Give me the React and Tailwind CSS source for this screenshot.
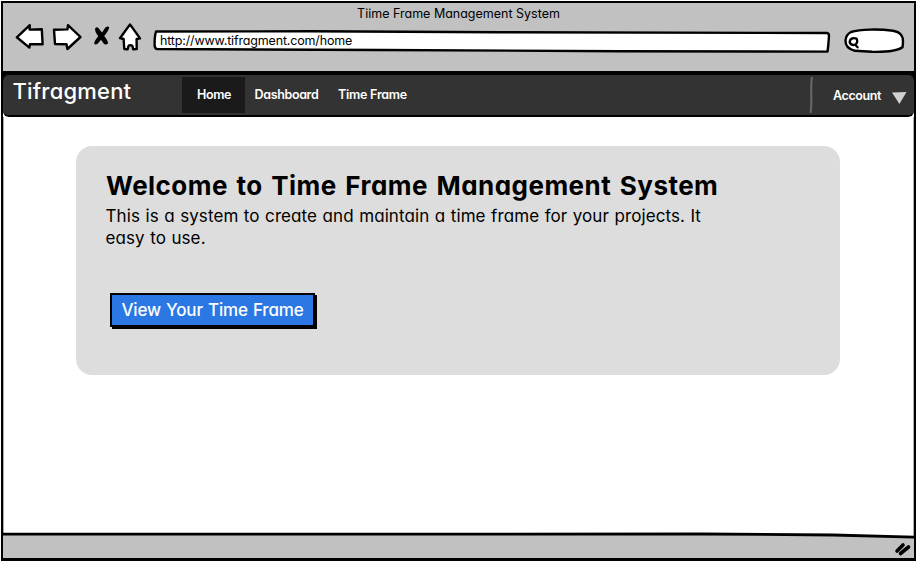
const ink = {
  fill: "white",
  stroke: "black",
  strokeWidth: 2.4,
  strokeLinejoin: "round",
  strokeLinecap: "round",
};

function NavigationIcons() {
  return (
    <div className="flex h-[30px] w-[128px] shrink-0">
      <svg width="128" height="30" viewBox="15 22 128 30" {...ink}>
        <path d="M16.8 37.3 29.8 25.2 29.6 29.6 41.8 29.2 42.6 44.3 30 44.1 29.4 47.6 Z" />
        <path d="M54 29.8 67.5 29.4 68 25.2 80.5 37 67.4 49 66.5 44.2 55 44 Z" />
        <path d="M95.2 28.2Q97.2 26 98.8 28.6L102 32.6 105.4 27.4Q108.6 25.6 109.2 27.6 108.6 31 104.2 36 108.4 41 108 43.6 105.4 45.6 103.6 43.6L101 39.8 97.6 43.8Q95 45.4 94.2 43.6 94 41.4 98.2 36.2 94.4 31 95.2 28.2Z" fill="black" stroke="none" />
        <path d="M130 24.4 140 38.4 136.6 39 136.7 49 133.2 49.2 132.6 46.4C132 44.7 128.8 44.7 128.3 46.4L127.7 49.2 124.3 49 123.6 39 120 38.2 Z" />
      </svg>
    </div>
  );
}

function AddressBar() {
  return (
    <div className="relative ml-[10px] mt-[7px] h-[24px] w-[678px] shrink-0">
      <svg className="absolute inset-0" width="678" height="24" viewBox="153 29 678 24" {...ink}>
        <path d="M156 31.5 310 31.3 500 32.2 827 33Q829 33.2 829 36L828.2 46 827.5 51.6 620 51.2 380 50 157 49Q154.4 48.5 154.6 44 154.6 36 156 31.5Z" />
      </svg>
      <div className="relative pl-[7px] pt-[3px] text-[12.5px] leading-[18px] tracking-[-0.16px]">
        http://www.tifragment.com/home
      </div>
    </div>
  );
}

function SearchBox() {
  return (
    <svg className="ml-[12px] mt-[5px] shrink-0" width="64" height="28" viewBox="843 27 64 28" {...ink}>
      <path d="M851 32C860 29 880 29 893 30.8C901 32 903.5 37 903 42L902.6 47C898 51 884 52 872 51.8L855 50.8C848 49 845.3 45 845.5 40.5Q846 34.5 851 32Z" />
      <path d="M856.5 38.6Q850.4 37 849.6 42 851 46 855.4 44.6 858.4 42 856.5 38.6M855.2 44.8 857.6 47.3" fill="none" strokeWidth="2.3" />
    </svg>
  );
}

function NavBar() {
  return (
    <nav className="flex h-[43px] shrink-0 rounded-[6px] border-b-2 border-black bg-[#333333] text-[12.5px] font-semibold leading-[18px] text-white shadow-[inset_0_1px_0_#000]">
      <div className="w-[179px] pl-[9.5px] pt-[3px] text-[22px] font-medium leading-[28px] tracking-[0.2px]">
        Tifragment
      </div>
      <div className="mt-[3px] h-[36px] w-[63px] bg-[#1a1a1a] pl-[15px] pt-[9px] tracking-[-0.4px]">Home</div>
      <div className="w-[93px] pl-[9.5px] pt-[12px] tracking-[-0.35px]">Dashboard</div>
      <div className="pt-[12px] tracking-[-0.25px]">Time Frame</div>
      <div className="ml-auto flex w-[106px]">
        <svg className="mt-[3px]" width="6" height="38" viewBox="0 0 6 38" fill="none" stroke="#696969" strokeWidth="2">
          <path d="M4 0C2 10 4.5 23 2.6 36" />
        </svg>
        <div className="ml-[19px] w-[60px] pt-[13px] tracking-[-0.4px]">Account</div>
        <svg className="-ml-px mt-[18px]" width="15" height="13" viewBox="0 0 15 13" fill="#d0d0d0">
          <path d="M0 .5 14.5 0 7.4 12Z" />
        </svg>
      </div>
    </nav>
  );
}

function WelcomePanel() {
  return (
    <section className="ml-[73px] mt-[29px] h-[229px] w-[764px] rounded-[16px] bg-[#dddddd] pl-[30px] pt-[23px]">
      <h1 className="text-[26px] font-bold leading-[34px] tracking-[0.46px] [word-spacing:2px]">
        Welcome to Time Frame Management System
      </h1>
      <p className="ml-[-0.5px] mt-[2px] w-[640px] text-[17px] leading-[22px] tracking-[0.09px] [word-spacing:0.6px]">
        This is a system to create and maintain a time frame for your projects. It
        <br />
        easy to use.
      </p>
      <button className="ml-[4px] mt-[44px] block h-[34px] w-[205px] whitespace-nowrap border-2 border-black bg-[#2b78e4] text-[17px] font-medium leading-[30px] tracking-[-0.17px] text-white shadow-[2px_2px_0_0_#000] [word-spacing:0.8px]">
        View Your Time Frame
      </button>
    </section>
  );
}

export default function App() {
  return (
    <div className="h-[562px] w-[917px] overflow-hidden bg-white py-px pl-px pr-px font-['Inter','Open_Sans',sans-serif] text-black [font-feature-settings:'cv11']">
      <div className="flex h-[560px] w-[915px] flex-col border-2 border-b-[3px] border-black bg-white shadow-[inset_1px_0_0_#00000055,inset_-1px_0_0_#00000055]">
        <header className="h-[71px] shrink-0 border-b-[3px] border-black bg-[#c1c1c1]">
          <div className="h-[19px] pt-[2px] text-center text-[12.5px] leading-[18px]">
            Tiime Frame Management System
          </div>
          <div className="flex items-start pl-[12px]">
            <NavigationIcons />
            <AddressBar />
            <SearchBox />
          </div>
        </header>
        <div className="bg-[linear-gradient(#000_50%,#fff_50%)]">
          <NavBar />
        </div>
        <main className="min-h-0 flex-1">
          <WelcomePanel />
        </main>
        <footer className="h-[26px] shrink-0">
          <svg className="block" width="911" height="26" viewBox="0 0 911 26">
            <path d="M0 2.2 700 2 830 3 911 5.2V26H0Z" fill="#c1c1c1" />
            <path d="M0 2.2 700 2 830 3 911 5.2" fill="none" stroke="black" strokeWidth="2.8" />
            <path d="M894 19 900 13M897.5 21.5 905.5 15" stroke="black" strokeWidth="3.6" strokeLinecap="round" />
          </svg>
        </footer>
      </div>
    </div>
  );
}
